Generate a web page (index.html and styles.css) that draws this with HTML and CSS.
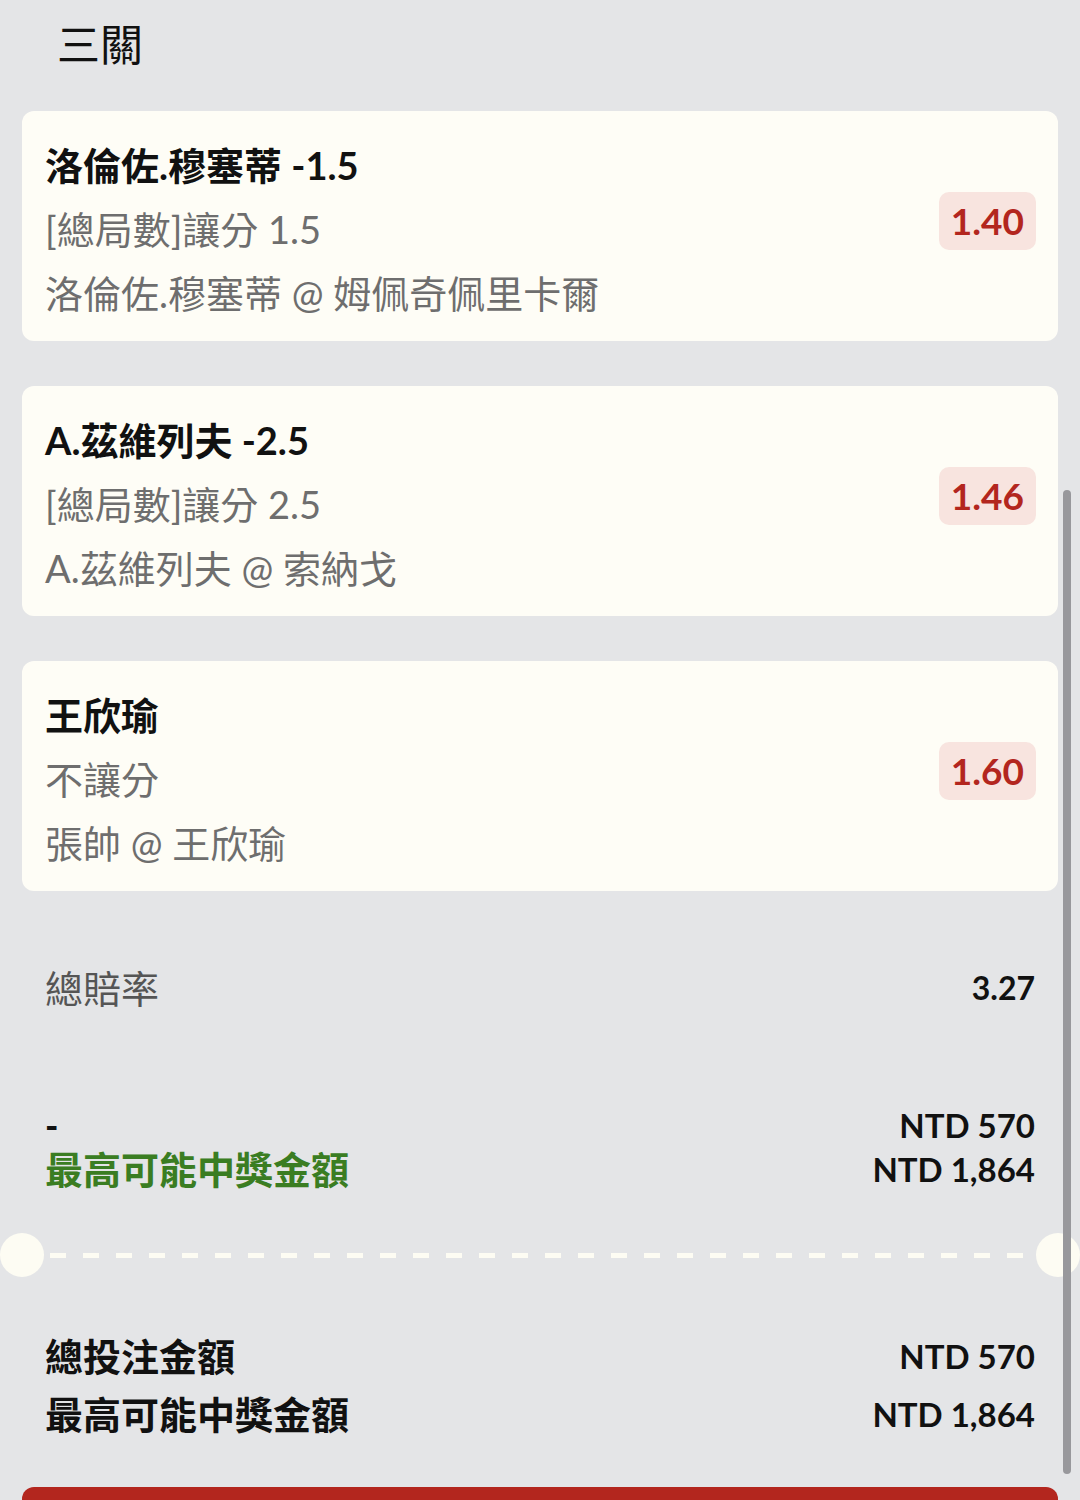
FILE: index.html
```html
<!DOCTYPE html>
<html>
<head>
    <title>三關</title>
    <link rel="stylesheet" href="styles.css">
</head>
<body>
    <h1 class="page-title">三關</h1>

    <div class="bets">
        <div class="bet">
            <div class="bet-info">
                <div class="bet-name">洛倫佐.穆塞蒂 -1.5</div>
                <div class="bet-line">[總局數]讓分 1.5</div>
                <div class="bet-line">洛倫佐.穆塞蒂 @ 姆佩奇佩里卡爾</div>
            </div>
            <div class="odds">1.40</div>
        </div>

        <div class="bet">
            <div class="bet-info">
                <div class="bet-name">A.茲維列夫 -2.5</div>
                <div class="bet-line">[總局數]讓分 2.5</div>
                <div class="bet-line">A.茲維列夫 @ 索納戈</div>
            </div>
            <div class="odds">1.46</div>
        </div>

        <div class="bet">
            <div class="bet-info">
                <div class="bet-name">王欣瑜</div>
                <div class="bet-line">不讓分</div>
                <div class="bet-line">張帥 @ 王欣瑜</div>
            </div>
            <div class="odds">1.60</div>
        </div>
    </div>

    <div class="summary">
        <div class="row total-odds">
            <span class="label">總賠率</span>
            <span class="value">3.27</span>
        </div>
        <div class="payout">
            <div class="row">
                <span class="dash">-</span>
                <span class="value">NTD 570</span>
            </div>
            <div class="row">
                <span class="win-label">最高可能中獎金額</span>
                <span class="value">NTD 1,864</span>
            </div>
        </div>
    </div>

    <div class="tear">
        <span class="notch"></span>
        <span class="dashes"></span>
        <span class="notch"></span>
    </div>

    <div class="totals">
        <div class="row">
            <span>總投注金額</span>
            <span class="value">NTD 570</span>
        </div>
        <div class="row">
            <span>最高可能中獎金額</span>
            <span class="value">NTD 1,864</span>
        </div>
    </div>

    <div class="submit"></div>

    <div class="scrollbar"></div>
</body>
</html>
```

FILE: styles.css
```css
body { margin: 0; background: #e4e5e7; font-family: Lato, "Noto Sans CJK TC", sans-serif; color: #111; height: 1500px; overflow: hidden; position: relative; }

.page-title { margin: 0 0 21px; padding-left: 57px; font-size: 43px; font-weight: 400; line-height: 90px; }

.bets { display: flex; flex-direction: column; gap: 45px; padding: 0 22px; }
.bet { display: flex; align-items: center; justify-content: space-between; background: #fefdf6; border-radius: 12px; padding: 22px 22px 16px 23px; height: 192px; }
.bet-name { font-size: 38px; font-weight: 700; line-height: 64px; }
.bet-line { font-size: 38px; color: #6e6e6e; line-height: 64px; }
.odds { background: #f8e4df; color: #b3261e; font-size: 37px; font-weight: 700; padding: 0 12px; line-height: 58px; border-radius: 10px; margin-bottom: 16px; }

.summary { padding: 77px 45px 0; }
.row { display: flex; justify-content: space-between; align-items: center; }
.total-odds { line-height: 40px; margin-bottom: 95px; }
.total-odds .label { font-size: 38px; color: #555; }
.total-odds .value { font-size: 32px; font-weight: 700; }
.payout .row { line-height: 44px; }
.dash { font-size: 36px; font-weight: 900; }
.win-label { font-size: 38px; font-weight: 700; color: #3a7d22; }
.value { font-size: 33px; font-weight: 700; }

.tear { display: flex; align-items: center; margin-top: 42px; }
.notch { width: 44px; height: 44px; border-radius: 50%; background: #fdfcf3; flex: none; }
.dashes { flex: 1; height: 5px; margin: 0 6px; background: repeating-linear-gradient(90deg, #fdfcf3 0 16px, transparent 16px 33px); }

.totals { padding: 50px 45px 0; }
.totals .row { line-height: 58px; font-size: 38px; font-weight: 700; }

.submit { margin: 44px 22px 0; height: 60px; background: #b3261e; border-radius: 12px 12px 0 0; }

.scrollbar { position: absolute; top: 490px; right: 9px; width: 8px; height: 984px; background: #98989c; border-radius: 4px; }
```
